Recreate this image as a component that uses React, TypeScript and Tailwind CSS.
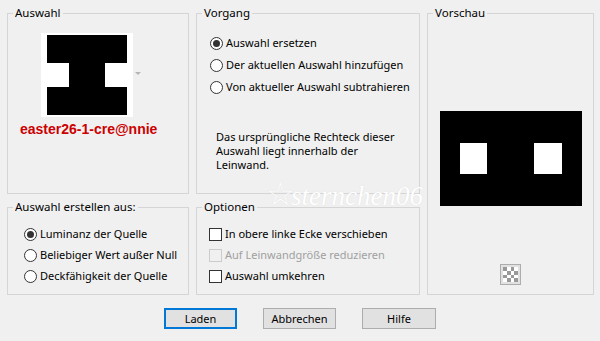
import React from "react";

const font = { fontFamily: '"Noto Sans", "Liberation Sans", sans-serif' };

function Radio({ checked, label }: { checked?: boolean; label: string }) {
  return (
    <div className="flex h-[21px] items-center">
      <span className="flex h-[13px] w-[13px] shrink-0 items-center justify-center rounded-full border border-[#333] bg-white">
        {checked && <span className="h-[7px] w-[7px] rounded-full bg-[#333]" />}
      </span>
      <span className="ml-[3px] whitespace-nowrap">{label}</span>
    </div>
  );
}

function Check({ label, disabled }: { label: string; disabled?: boolean }) {
  return (
    <div className="flex h-[21px] items-center">
      <span
        className={
          disabled
            ? "h-[13px] w-[13px] shrink-0 border border-[#cccccc] bg-[#f0f0f0]"
            : "h-[13px] w-[13px] shrink-0 border border-[#333] bg-white"
        }
      />
      <span className={disabled ? "ml-[3px] whitespace-nowrap text-[#a0a0a0]" : "ml-[3px] whitespace-nowrap"}>
        {label}
      </span>
    </div>
  );
}

function Group({ title, className, children }: { title: string; className?: string; children: React.ReactNode }) {
  return (
    <fieldset className={"min-w-0 border border-[#d5d5d5] " + (className ?? "")}>
      <legend className="ml-[5px] px-[2px] text-[11.5px] leading-[14px]">{title}</legend>
      {children}
    </fieldset>
  );
}

function Checker() {
  const cells = [];
  for (let r = 0; r < 4; r++) {
    for (let c = 0; c < 4; c++) {
      cells.push(
        <span key={r * 4 + c} className={(r + c) % 2 === 0 ? "bg-[#999999]" : "bg-white"} />
      );
    }
  }
  return (
    <div className="flex h-[21px] w-[21px] items-center justify-center border border-[#adadad] bg-[#e1e1e1]">
      <div className="grid h-[15px] w-[15px] grid-cols-4 grid-rows-4">{cells}</div>
    </div>
  );
}

export default function App() {
  return (
    <div className="relative h-[341px] w-[600px] bg-[#f0f0f0] text-[11px] text-black" style={font}>
      <div className="grid grid-cols-[182px_224px_167px] grid-rows-[188px_95px] gap-x-[7px] gap-y-[6px] px-[7px] pt-[6px]">
        <Group title="Auswahl">
          <div className="ml-[33px] mt-[13px] flex items-center">
            <svg width="92" height="84" viewBox="0 0 92 84">
              <rect width="92" height="84" fill="#fff" />
              <rect x="6" y="2" width="80" height="28" fill="#000" />
              <rect x="28" y="30" width="36" height="24" fill="#000" />
              <rect x="6" y="54" width="80" height="28" fill="#000" />
            </svg>
            <svg width="6" height="4" viewBox="0 0 6 4" className="ml-[2px] mt-[-2px]">
              <path d="M0 0 L6 0 L3 3 Z" fill="#b5b5b5" />
            </svg>
          </div>
          <div
            className="ml-[12px] mt-[4px] text-[14px] font-bold leading-[16px] text-[#cc0000]"
            style={{ fontFamily: '"Liberation Sans", Arial, sans-serif' }}
          >
            easter26-1-cre@nnie
          </div>
        </Group>

        <Group title="Vorgang">
          <div className="pl-[13px] pt-[13px]">
            <div className="flex flex-col">
              <div className="h-[22px]"><Radio checked label="Auswahl ersetzen" /></div>
              <div className="h-[22px]"><Radio label="Der aktuellen Auswahl hinzufügen" /></div>
              <div className="h-[22px]"><Radio label="Von aktueller Auswahl subtrahieren" /></div>
            </div>
            <p className="ml-[6px] mt-[31px] leading-[14px]">
              Das ursprüngliche Rechteck dieser
              <br />
              Auswahl liegt innerhalb der
              <br />
              Leinwand.
            </p>
          </div>
        </Group>

        <Group title="Vorschau" className="row-span-2">
          <div className="flex flex-col items-center pt-[91px]">
            <svg width="142" height="95" viewBox="0 0 142 95">
              <rect width="142" height="95" fill="#000" />
              <rect x="20" y="32" width="27" height="31" fill="#fff" />
              <rect x="94" y="32" width="28" height="31" fill="#fff" />
            </svg>
            <div className="mt-[58px]">
              <Checker />
            </div>
          </div>
        </Group>

        <Group title="Auswahl erstellen aus:">
          <div className="pl-[16px] pt-[10px]">
            <Radio checked label="Luminanz der Quelle" />
            <Radio label="Beliebiger Wert außer Null" />
            <Radio label="Deckfähigkeit der Quelle" />
          </div>
        </Group>

        <Group title="Optionen">
          <div className="pl-[12px] pt-[10px]">
            <Check label="In obere linke Ecke verschieben" />
            <Check disabled label="Auf Leinwandgröße reduzieren" />
            <Check label="Auswahl umkehren" />
          </div>
        </Group>
      </div>

      <div className="mt-[13px] flex justify-center gap-[26px]">
        <button className="h-[21px] w-[73px] border-2 border-[#0078d7] bg-[#e1e1e1] leading-none">Laden</button>
        <button className="h-[21px] w-[73px] border border-[#adadad] bg-[#e1e1e1] leading-none">Abbrechen</button>
        <button className="h-[21px] w-[74px] border border-[#adadad] bg-[#e1e1e1] leading-none">Hilfe</button>
      </div>

      <div
        className="pointer-events-none absolute left-[266px] top-[178px] flex items-end text-[27px] italic text-white"
        style={{ fontFamily: '"Liberation Serif", serif', textShadow: "0 0 1px #d8d8d8" }}
      >
        <span className="mr-[-4px] text-[32px] not-italic leading-none">☆</span>
        <span className="leading-none">sternchen06</span>
      </div>
    </div>
  );
}
